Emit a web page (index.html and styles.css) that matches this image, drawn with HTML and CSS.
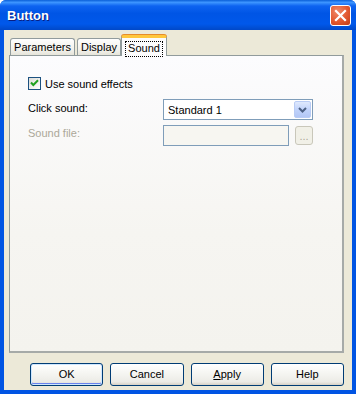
FILE: index.html
```html
<!DOCTYPE html>
<html lang="en">
<head>
    <meta charset="UTF-8">
    <title>Button</title>
    <link rel="stylesheet" href="styles.css">
</head>
<body>
    <div class="window">
        <div class="titlebar">
            <span class="title">Button</span>
            <div class="close-btn">
                <svg width="13" height="13" viewBox="0 0 13 13">
                    <path d="M2 2 L11 11 M11 2 L2 11" stroke="#fff" stroke-width="2.2" stroke-linecap="square"/>
                </svg>
            </div>
        </div>

        <div class="client">
            <div class="tabs">
                <div class="tab tab-params">Parameters</div>
                <div class="tab tab-display">Display</div>
                <div class="tab active"><span class="focus">Sound</span></div>
            </div>

            <div class="panel">
                <label class="check-row">
                    <span class="checkbox">
                        <svg width="11" height="11" viewBox="0 0 11 11">
                            <path d="M2 4.5 L4.3 7 L9 2.3" fill="none" stroke="#21a121" stroke-width="2"/>
                        </svg>
                    </span>
                    Use sound effects
                </label>

                <div class="form">
                    <div class="label">Click sound:</div>
                    <div class="combo">
                        <span class="combo-text">Standard 1</span>
                        <span class="combo-btn">
                            <svg width="9" height="6" viewBox="0 0 9 6">
                                <path d="M1 1 L4.5 4.5 L8 1" fill="none" stroke="#4d6185" stroke-width="2"/>
                            </svg>
                        </span>
                    </div>

                    <div class="label disabled">Sound file:</div>
                    <div class="file-row">
                        <div class="edit"></div>
                        <div class="browse">...</div>
                    </div>
                </div>
            </div>

            <div class="buttons">
                <div class="btn default">OK</div>
                <div class="btn">Cancel</div>
                <div class="btn"><u>A</u>pply</div>
                <div class="btn">Help</div>
            </div>
        </div>
    </div>
</body>
</html>
```

FILE: styles.css
```css
* {
    margin: 0;
    padding: 0;
    box-sizing: border-box;
}

body {
    font-family: 'Liberation Sans', Arial, sans-serif;
    font-size: 11px;
    color: #000;
    background: #fff;
}

.window {
    width: 356px;
    height: 394px;
    display: flex;
    flex-direction: column;
    background: #0054e3;
    border-radius: 6px 6px 0 0;
    overflow: hidden;
}

/* title bar */
.titlebar {
    height: 30px;
    flex: none;
    display: flex;
    align-items: center;
    justify-content: space-between;
    padding: 0 5px 0 7px;
    background: linear-gradient(to bottom, #0a5fd8 0%, #3d95ff 8%, #0d63f0 20%, #0055e5 45%, #0058ea 80%, #0048c8 100%);
}

.title {
    font-family: 'Liberation Sans', Arial, sans-serif;
    font-weight: bold;
    font-size: 13px;
    color: #fff;
    text-shadow: 1px 1px 0 #0a1e80;
    margin-top: 1px;
}

.close-btn {
    width: 21px;
    height: 21px;
    border: 1px solid #fff;
    border-radius: 3px;
    background: radial-gradient(circle at 35% 30%, #f08a6a 0%, #e2582f 55%, #c23c16 100%);
    display: flex;
    align-items: center;
    justify-content: center;
}

/* client area */
.client {
    flex: 1;
    background: #ece9d8;
    margin: 0 4px 4px 4px;
    padding: 5px 8px 0 5px;
    display: flex;
    flex-direction: column;
}

.tabs {
    display: flex;
    align-items: flex-end;
    height: 20px;
    padding-left: 1px;
    position: relative;
    z-index: 2;
}

.tab {
    height: 17px;
    border: 1px solid #919b9c;
    border-bottom: none;
    border-radius: 3px 3px 0 0;
    background: linear-gradient(to bottom, #fefefe, #f1f0ea 70%, #e6e4da);
    padding-top: 2px;
    text-align: center;
    line-height: 13px;
    margin-right: 2px;
    white-space: nowrap;
}

.tab-params {
    width: 65px;
}

.tab-display {
    width: 44px;
}

.tab.active {
    width: 46px;
    height: 21px;
    margin-bottom: -1px;
    margin-left: -2px;
    padding-top: 3px;
    background: #fcfcfd;
    border-top: 3px solid #ffc73c;
    box-shadow: 0 -1px 0 #e68b2c;
}

.focus {
    display: inline-block;
    border: 1px dotted #000;
    padding: 0 2px 1px 2px;
}

/* tab page */
.panel {
    height: 298px;
    border: 1px solid #919b9c;
    border-right-width: 2px;
    border-right-color: #a6aaa8;
    border-bottom-width: 2px;
    border-bottom-color: #a6aaa8;
    background: linear-gradient(to bottom, #fcfcfe 0%, #f6f5f1 60%, #f4f3ee 100%);
    padding: 21px 0 0 18px;
}

.check-row {
    display: flex;
    align-items: center;
    gap: 4px;
    height: 13px;
}

.checkbox {
    width: 13px;
    height: 13px;
    border: 1px solid #1c5180;
    background: linear-gradient(135deg, #dcdcd7, #fff);
    display: flex;
    align-items: center;
    justify-content: center;
}

.form {
    display: grid;
    grid-template-columns: 135px 150px;
    grid-auto-rows: 21px;
    row-gap: 5px;
    margin-top: 9px;
}

.label {
    padding-top: 3px;
}

.label.disabled {
    color: #aca899;
    padding-top: 2px;
}

.combo {
    border: 1px solid #7f9db9;
    background: #fff;
    display: flex;
    align-items: center;
    justify-content: space-between;
    padding: 1px;
}

.combo-text {
    padding-left: 3px;
}

.combo-btn {
    width: 17px;
    height: 17px;
    border: 1px solid #b9ccf5;
    border-radius: 2px;
    background: linear-gradient(to bottom, #dfe9fd, #c1d3fb 50%, #b3c7f5);
    display: flex;
    align-items: center;
    justify-content: center;
}

.file-row {
    display: flex;
    gap: 6px;
    width: 150px;
}

.edit {
    width: 126px;
    border: 1px solid #7f9db9;
    background: #f7f6f1;
}

.browse {
    width: 18px;
    height: 19px;
    margin-top: 1px;
    border: 1px solid #c9c7ba;
    border-radius: 3px;
    background: #f1f0e7;
    color: #aca899;
    text-align: center;
    line-height: 18px;
}

/* dialog buttons */
.buttons {
    display: flex;
    gap: 7px;
    margin-top: 10px;
    padding-left: 21px;
}

.btn {
    width: 74px;
    height: 23px;
    border: 1px solid #003c74;
    border-radius: 3px;
    background: linear-gradient(to bottom, #ffffff 0%, #f4f4f0 50%, #ecebe6 85%, #d6d0c5 100%);
    text-align: center;
    line-height: 21px;
}

.btn.default {
    box-shadow: inset 0 0 0 1px #cee7ff, inset 0 -1px 0 1px #6982ee;
}
```
